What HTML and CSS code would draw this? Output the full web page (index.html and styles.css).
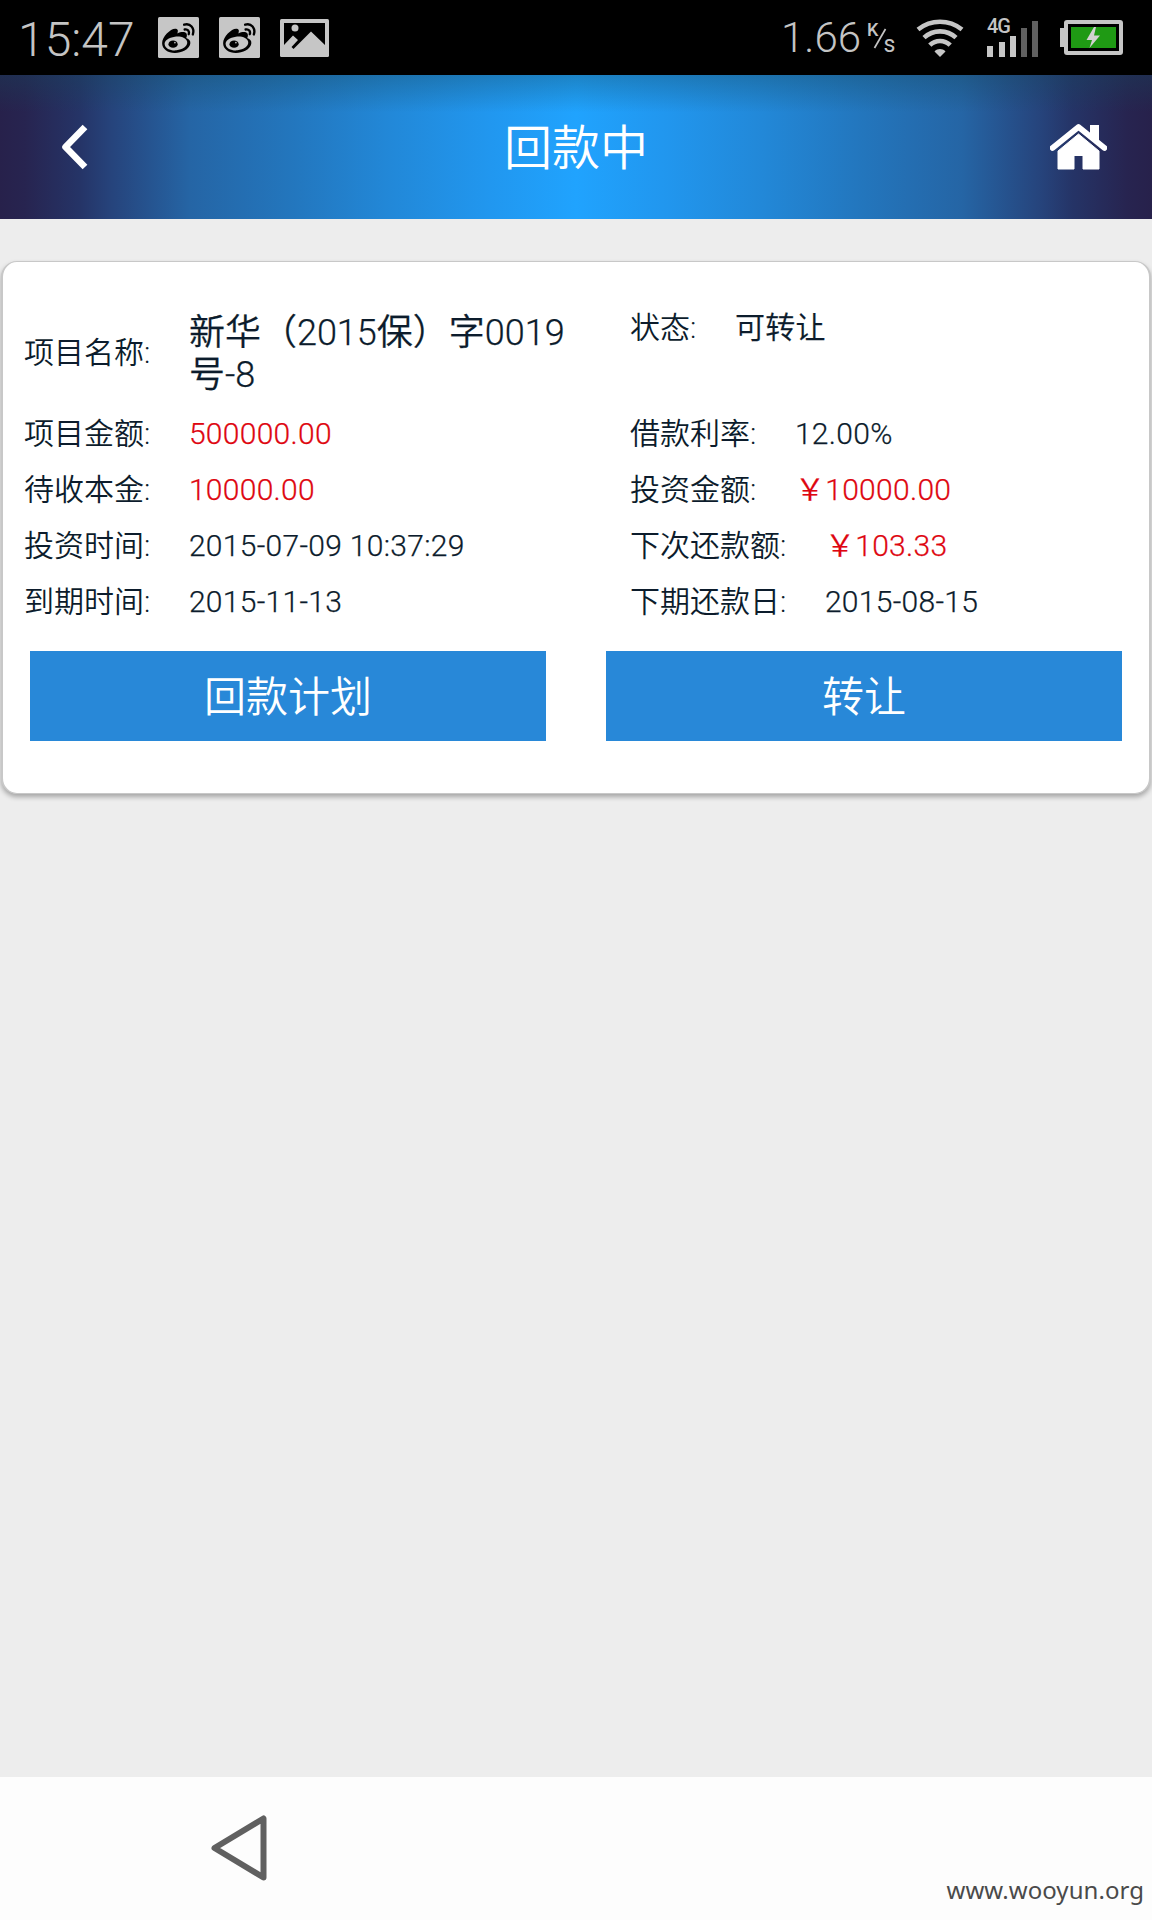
FILE: index.html
```html
<!DOCTYPE html>
<html lang="zh-CN">
<head>
<meta charset="utf-8">
<title>回款中</title>
<link rel="stylesheet" href="styles.css">
</head>
<body>
<svg width="0" height="0" class="defs">
  <symbol id="weibo" viewBox="0 0 40 40">
    <rect width="40" height="40" rx="1.5" fill="#c6c6c6"/>
    <path fill="#000" fill-rule="evenodd" d="M4 25.500C4 19 13 10.500 17.500 11.500C20 12 19.500 14 19 16C22 14.500 27 14 28 16.500C28.500 18 28 19.500 27.500 20.500C30.500 21.500 32 23.500 31.500 26C30.500 31.500 23 35 16.500 35C9.500 35 4 31 4 25.500ZM6.500 26.500C7 31 12.500 33 18 32.500C24 32 29 28.500 28.500 24.500C28 20.500 22.500 18.500 16.500 19.200C10.500 20 6 23 6.500 26.500Z"/>
    <ellipse cx="14.700" cy="26.500" rx="4.500" ry="3.600" fill="#000"/>
    <circle cx="16.500" cy="25" r=".8" fill="#c6c6c6"/>
    <path fill="none" stroke="#000" stroke-width="2.300" stroke-linecap="round" d="M25.500 7.500C31.500 5.500 36 11 34 17M26 12.200C29 11.500 31 14 30 16.800"/>
  </symbol>
</svg>
<div class="screen">
  <div class="status">
    <span class="clock">15:47</span>
    <svg class="app" width="41" height="41"><use href="#weibo"/></svg>
    <svg class="app" width="41" height="41"><use href="#weibo"/></svg>
    <svg class="photo" width="49" height="38" viewBox="0 0 49 38">
      <rect width="49" height="38" rx="1.500" fill="#c6c6c6"/>
      <path d="M4 4H45V26L31 12.500L13.500 30L11.500 28L18 21L13 16.500L4 26Z" fill="#000"/>
      <circle cx="15" cy="9" r="3.500" fill="#c6c6c6"/>
    </svg>
    <span class="speed">1.66</span>
    <span class="unit"><span class="k">K</span><svg width="15" height="21" viewBox="0 0 15 21"><path d="M1.500 20L12.500 1" stroke="#c4c4c4" stroke-width="1.700"/></svg><span class="s">s</span></span>
    <svg class="wifi" width="48" height="38" viewBox="0 0 48 38">
      <g fill="none" stroke="#c6c6c6" stroke-width="4.600">
        <path d="M2 10.500C15 .2 33 .2 46 10.500"/>
        <path d="M8 18.700C17 10.200 31 10.200 40 18.700"/>
        <path d="M13.800 26.200C19.500 20.500 28.500 20.500 34.200 26.200"/>
      </g>
      <path d="M18.500 32.500C21.500 29.300 26.500 29.300 29.500 32.500L24 38Z" fill="#c6c6c6"/>
    </svg>
    <div class="signal">
      <span class="net">4G</span>
      <svg width="52" height="40" viewBox="0 0 52 40">
        <path fill="#c6c6c6" d="M0 28H6V39H0ZM12 24H18V39H12ZM23 18H29V39H23Z"/>
        <path fill="#606060" d="M34 10H40V39H34ZM45 3H51V39H45Z"/>
      </svg>
    </div>
    <svg class="battery" width="63" height="35" viewBox="0 0 63 35">
      <path d="M0 8H6V27H0Z" fill="#c6c6c6"/>
      <rect x="6" y="2" width="55" height="31" rx="1" fill="#000" stroke="#c6c6c6" stroke-width="4"/>
      <rect x="11" y="7" width="45" height="21" fill="#1f9a14"/>
      <path d="M34 7L26.500 20H32L29.500 28L40 15.500H34L36 7Z" fill="#d2d2d2"/>
    </svg>
  </div>
  <header class="bar">
    <svg width="42" height="48" viewBox="0 0 42 48"><path d="M25 4L5.500 24L25 44" fill="none" stroke="#fff" stroke-width="6.600" stroke-linejoin="round"/></svg>
    <h1>回款中</h1>
    <svg width="57" height="46" viewBox="0 0 57 46" fill="#fff">
      <path d="M2.500 24L28.500 3L54.500 24" fill="none" stroke="#fff" stroke-width="5.600" stroke-linecap="round" stroke-linejoin="round"/>
      <path d="M40 1H49V18L40 11Z"/>
      <path d="M28.500 10L49 27V45H33V31.500H24V45H8V27Z" stroke="#fff" stroke-width="1" stroke-linejoin="round"/>
    </svg>
  </header>
  <main>
    <section class="card">
      <div class="details">
        <dl>
          <div class="row first"><dt>项目名称:</dt><dd class="name">新华（2015保）字0019号-8</dd></div>
          <div class="row"><dt>项目金额:</dt><dd class="money">500000.00</dd></div>
          <div class="row"><dt>待收本金:</dt><dd class="money">10000.00</dd></div>
          <div class="row"><dt>投资时间:</dt><dd>2015-07-09 10:37:29</dd></div>
          <div class="row"><dt>到期时间:</dt><dd>2015-11-13</dd></div>
        </dl>
        <dl>
          <div class="row first state"><dt>状态:</dt><dd>可转让</dd></div>
          <div class="row"><dt>借款利率:</dt><dd>12.00%</dd></div>
          <div class="row"><dt>投资金额:</dt><dd class="money">￥10000.00</dd></div>
          <div class="row"><dt>下次还款额:</dt><dd class="money">￥103.33</dd></div>
          <div class="row"><dt>下期还款日:</dt><dd>2015-08-15</dd></div>
        </dl>
      </div>
      <div class="actions">
        <button>回款计划</button>
        <button>转让</button>
      </div>
    </section>
  </main>
  <nav class="nav">
    <svg width="58" height="68" viewBox="0 0 58 68"><path d="M4.500 34L53.500 4.500V63.500Z" fill="none" stroke="#606060" stroke-width="6" stroke-linejoin="round"/></svg>
    <span class="site">www.wooyun.org</span>
  </nav>
</div>
</body>
</html>
```
FILE: styles.css
```css
* { box-sizing: border-box; margin: 0; padding: 0; }
body {
  font-family: Roboto, "Noto Sans CJK SC", sans-serif;
  font-weight: 350;
  color: #0c1c2c;
  background: #ededed;
}
.defs { display: block; position: absolute; }
svg { display: block; flex: none; }
.screen { width: 1152px; height: 1920px; display: flex; flex-direction: column; overflow: hidden; }

.status {
  height: 75px;
  padding: 0 29px 0 18px;
  background: #000;
  color: #c4c4c4;
  display: flex;
  align-items: center;
  font-weight: 300;
}
.clock { width: 140px; font-size: 48px; line-height: 75px; padding-top: 3px; }
.app { margin-right: 20px; }
.photo { margin-top: 1px; margin-right: auto; }
.speed { font-size: 42px; line-height: 75px; }
.unit { display: flex; width: 31px; height: 31px; margin: 0 18px 0 6px; font-weight: 500; }
.unit svg { margin: 6px -5px 0 -5px; }
.k { font-size: 18px; line-height: 15px; }
.s { font-size: 23px; line-height: 28px; margin-top: 9px; font-weight: 400; }
.wifi { margin-right: 23px; }
.signal { display: grid; margin-right: 21px; }
.signal > * { grid-area: 1 / 1; }
.net { font-size: 20px; font-weight: 500; line-height: 16px; letter-spacing: -1px; }

.bar {
  height: 144px;
  padding: 0 45px 0 60px;
  display: flex;
  align-items: center;
  justify-content: space-between;
  color: #fff;
  background:
    linear-gradient(rgba(20, 70, 90, .34), rgba(20, 70, 90, 0) 26%),
    linear-gradient(90deg, #27214b 0, #272450 25px, #253467 80px, #26437b 110px, #2565a5 190px, #2376bd 290px, #2288d8 390px, #2197ef 490px, #20a3fe 576px, #2197ef 662px, #2288d8 762px, #2376bd 862px, #2565a5 962px, #26437b 1042px, #253467 1072px, #272450 1127px, #27214b 1152px);
}
h1 { font-size: 48px; font-weight: inherit; line-height: 60px; padding-top: 3px; }

main { flex: 1; padding: 42px 1px 0; }
.card {
  height: 533px;
  border: 1px solid #c8c8c8;
  border-width: 1px 2px;
  border-radius: 16px;
  background: #fff;
  box-shadow: 0 3px 5px rgba(0, 0, 0, .3);
  padding: 42px 27px 0;
}
.details { display: grid; grid-template-columns: 606px 1fr; margin-left: -6px; }
.row { display: flex; align-items: center; height: 56px; font-size: 30px; line-height: 56px; }
.row.first { height: 102px; padding-bottom: 2px; }
.row.first dt { padding-bottom: 2px; }
.row.state { align-items: flex-start; line-height: 48px; }
dt { margin-right: 38.6px; }
dd { letter-spacing: .3px; -webkit-text-stroke: .25px currentColor; }
dd.name { width: 390px; font-size: 36px; line-height: 42px; letter-spacing: 0; }
.money { color: #de0610; }
.actions { display: grid; grid-template-columns: 516px 516px; gap: 60px; margin-top: 21px; }
button {
  height: 90px;
  padding-bottom: 5px;
  border: 0;
  background: #2888d8;
  color: #fff;
  font: inherit;
  font-size: 42px;
}

.nav {
  height: 143px;
  padding: 0 8px 21px 210px;
  background: #fdfdfd;
  display: flex;
  justify-content: space-between;
  align-items: flex-end;
}
.nav svg { margin-bottom: 17px; }
.site { color: #4a4a4a; font: 400 24px/18px "Noto Sans", sans-serif; letter-spacing: .05px; }
```
